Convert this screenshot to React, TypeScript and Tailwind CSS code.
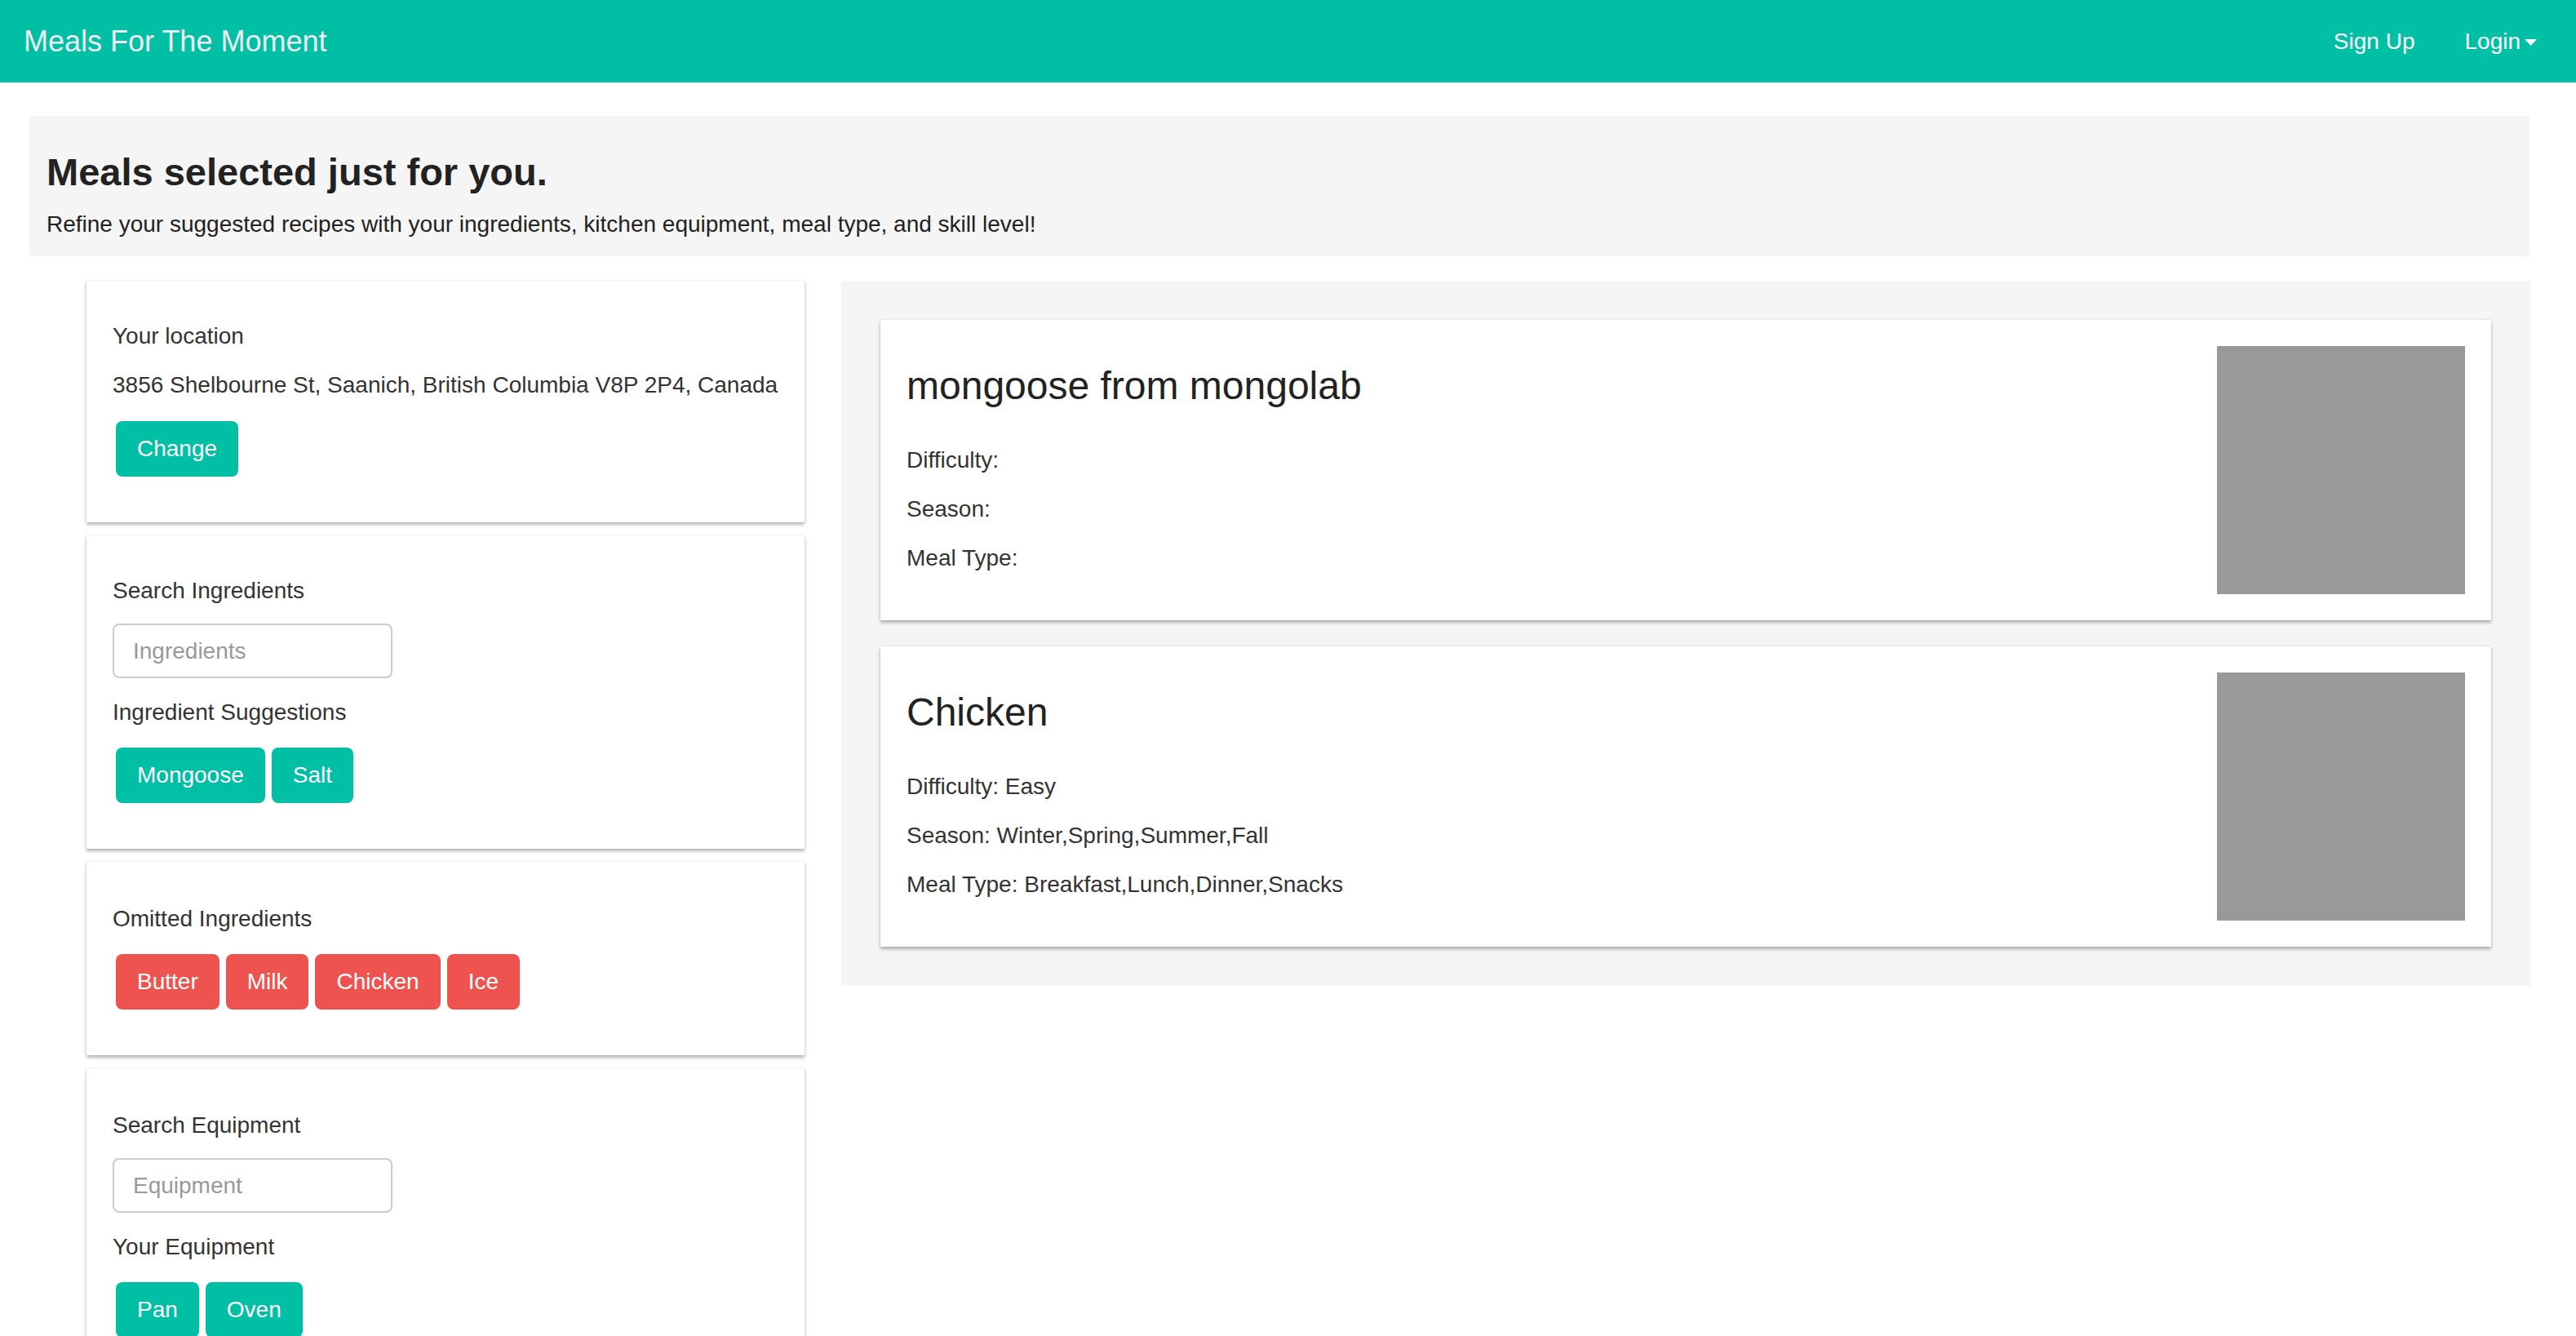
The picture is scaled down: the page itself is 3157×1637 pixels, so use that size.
import { ReactNode } from 'react'

const teal = 'bg-[#00bfa5]'

function Navbar() {
  return (
    <nav className={`${teal} h-[101px] flex items-center pl-[29px] pr-[48px]`}>
      <span className="text-[36px] leading-[40px] text-[#eeeeee]">Meals For The Moment</span>
      <div className="ml-auto flex items-center text-white text-[28px] leading-[40px]">
        <span>Sign Up</span>
        <span className="ml-[61px]">Login</span>
        <svg className="ml-[5px] mt-[2px]" width="15" height="8" viewBox="0 0 15 8">
          <path d="M0 0 L15 0 L7.5 8 Z" fill="#ffffff" />
        </svg>
      </div>
    </nav>
  )
}

function Jumbotron() {
  return (
    <div className="ml-[36px] w-[3064px] mt-[41px] bg-[#f5f5f5] pl-[21px] pt-[43px] pb-[19px] text-[#222222]">
      <h1 className="text-[47px] leading-[52px] font-bold">Meals selected just for you.</h1>
      <p className="mt-[18px] text-[28px] leading-[40px]">
        Refine your suggested recipes with your ingredients, kitchen equipment, meal type, and skill level!
      </p>
    </div>
  )
}

const Card = ({ children }: { children: ReactNode }) => {
  return (
    <div className="bg-white pl-[32px] pr-[32px] pt-[48px] pb-[56px] shadow-[0_3px_4px_rgba(0,0,0,0.28),0_0_2px_rgba(0,0,0,0.12)]">
      {children}
    </div>
  )
}

const Label = ({ children, className = '' }: { children: ReactNode; className?: string }) => (
  <p className={`text-[28px] leading-[40px] text-[#333333] ${className}`}>{children}</p>
)

const Btn = ({ children, red = false }: { children: string; red?: boolean }) => (
  <button
    className={`h-[68px] px-[26px] rounded-[8px] text-[28px] leading-[40px] text-white ${
      red ? 'bg-[#ef5350]' : 'bg-[#00bfa5]'
    }`}
  >
    {children}
  </button>
)

const BtnRow = ({ children, className = '' }: { children: ReactNode; className?: string }) => (
  <div className={`flex gap-[8px] ml-[4px] ${className}`}>{children}</div>
)

const SearchInput = ({ placeholder }: { placeholder: string }) => (
  <input
    placeholder={placeholder}
    className="block w-[343px] h-[67px] border-2 border-[#cccccc] rounded-[8px] px-[23px] text-[28px] text-[#555555] placeholder:text-[#999999] outline-none"
  />
)

function Sidebar() {
  return (
    <div className="w-[995px] pl-[70px] pr-[45px] flex flex-col gap-[16px]">
      <Card>
        <Label>Your location</Label>
        <Label className="mt-[20px]">3856 Shelbourne St, Saanich, British Columbia V8P 2P4, Canada</Label>
        <BtnRow className="mt-[24px]">
          <Btn>Change</Btn>
        </BtnRow>
      </Card>
      <Card>
        <Label>Search Ingredients</Label>
        <div className="mt-[20px]">
          <SearchInput placeholder="Ingredients" />
        </div>
        <Label className="mt-[22px]">Ingredient Suggestions</Label>
        <BtnRow className="mt-[23px]">
          <Btn>Mongoose</Btn>
          <Btn>Salt</Btn>
        </BtnRow>
      </Card>
      <Card>
        <div className="pt-[2px]">
          <Label>Omitted Ingredients</Label>
        </div>
        <BtnRow className="mt-[23px]">
          <Btn red>Butter</Btn>
          <Btn red>Milk</Btn>
          <Btn red>Chicken</Btn>
          <Btn red>Ice</Btn>
        </BtnRow>
      </Card>
      <Card>
        <div className="pt-[2px]">
          <Label>Search Equipment</Label>
        </div>
        <div className="mt-[20px]">
          <SearchInput placeholder="Equipment" />
        </div>
        <Label className="mt-[22px]">Your Equipment</Label>
        <BtnRow className="mt-[23px]">
          <Btn>Pan</Btn>
          <Btn>Oven</Btn>
        </BtnRow>
      </Card>
    </div>
  )
}

interface IMeal {
  name: string
  difficulty: string
  season: string
  mealType: string
}

const meals: IMeal[] = [
  { name: 'mongoose from mongolab', difficulty: '', season: '', mealType: '' },
  {
    name: 'Chicken',
    difficulty: 'Easy',
    season: 'Winter,Spring,Summer,Fall',
    mealType: 'Breakfast,Lunch,Dinner,Snacks',
  },
]

const MealCard = ({ meal }: { meal: IMeal }) => {
  return (
    <div className="bg-white p-[32px] flex items-start shadow-[0_3px_4px_rgba(0,0,0,0.28),0_0_2px_rgba(0,0,0,0.12)]">
      <div className="flex-1 pt-[22px] text-[#333333]">
        <h3 className="text-[48px] leading-[53px] text-[#222222]">{meal.name}</h3>
        <p className="mt-[45px] text-[28px] leading-[40px]">Difficulty: {meal.difficulty}</p>
        <p className="mt-[20px] text-[28px] leading-[40px]">Season: {meal.season}</p>
        <p className="mt-[20px] text-[28px] leading-[40px]">Meal Type: {meal.mealType}</p>
      </div>
      <div className="w-[304px] h-[304px] bg-[#999999]" />
    </div>
  )
}

export default function App() {
  return (
    <div className="min-h-screen bg-white font-['Liberation_Sans',Arial,sans-serif]">
      <Navbar />
      <Jumbotron />
      <div className="ml-[36px] w-[3065px] mt-[30px] flex items-start">
        <Sidebar />
        <div className="flex-1 bg-[#f5f5f5] p-[48px] flex flex-col gap-[32px]">
          {meals.map((m) => (
            <MealCard key={m.name} meal={m} />
          ))}
        </div>
      </div>
    </div>
  )
}
